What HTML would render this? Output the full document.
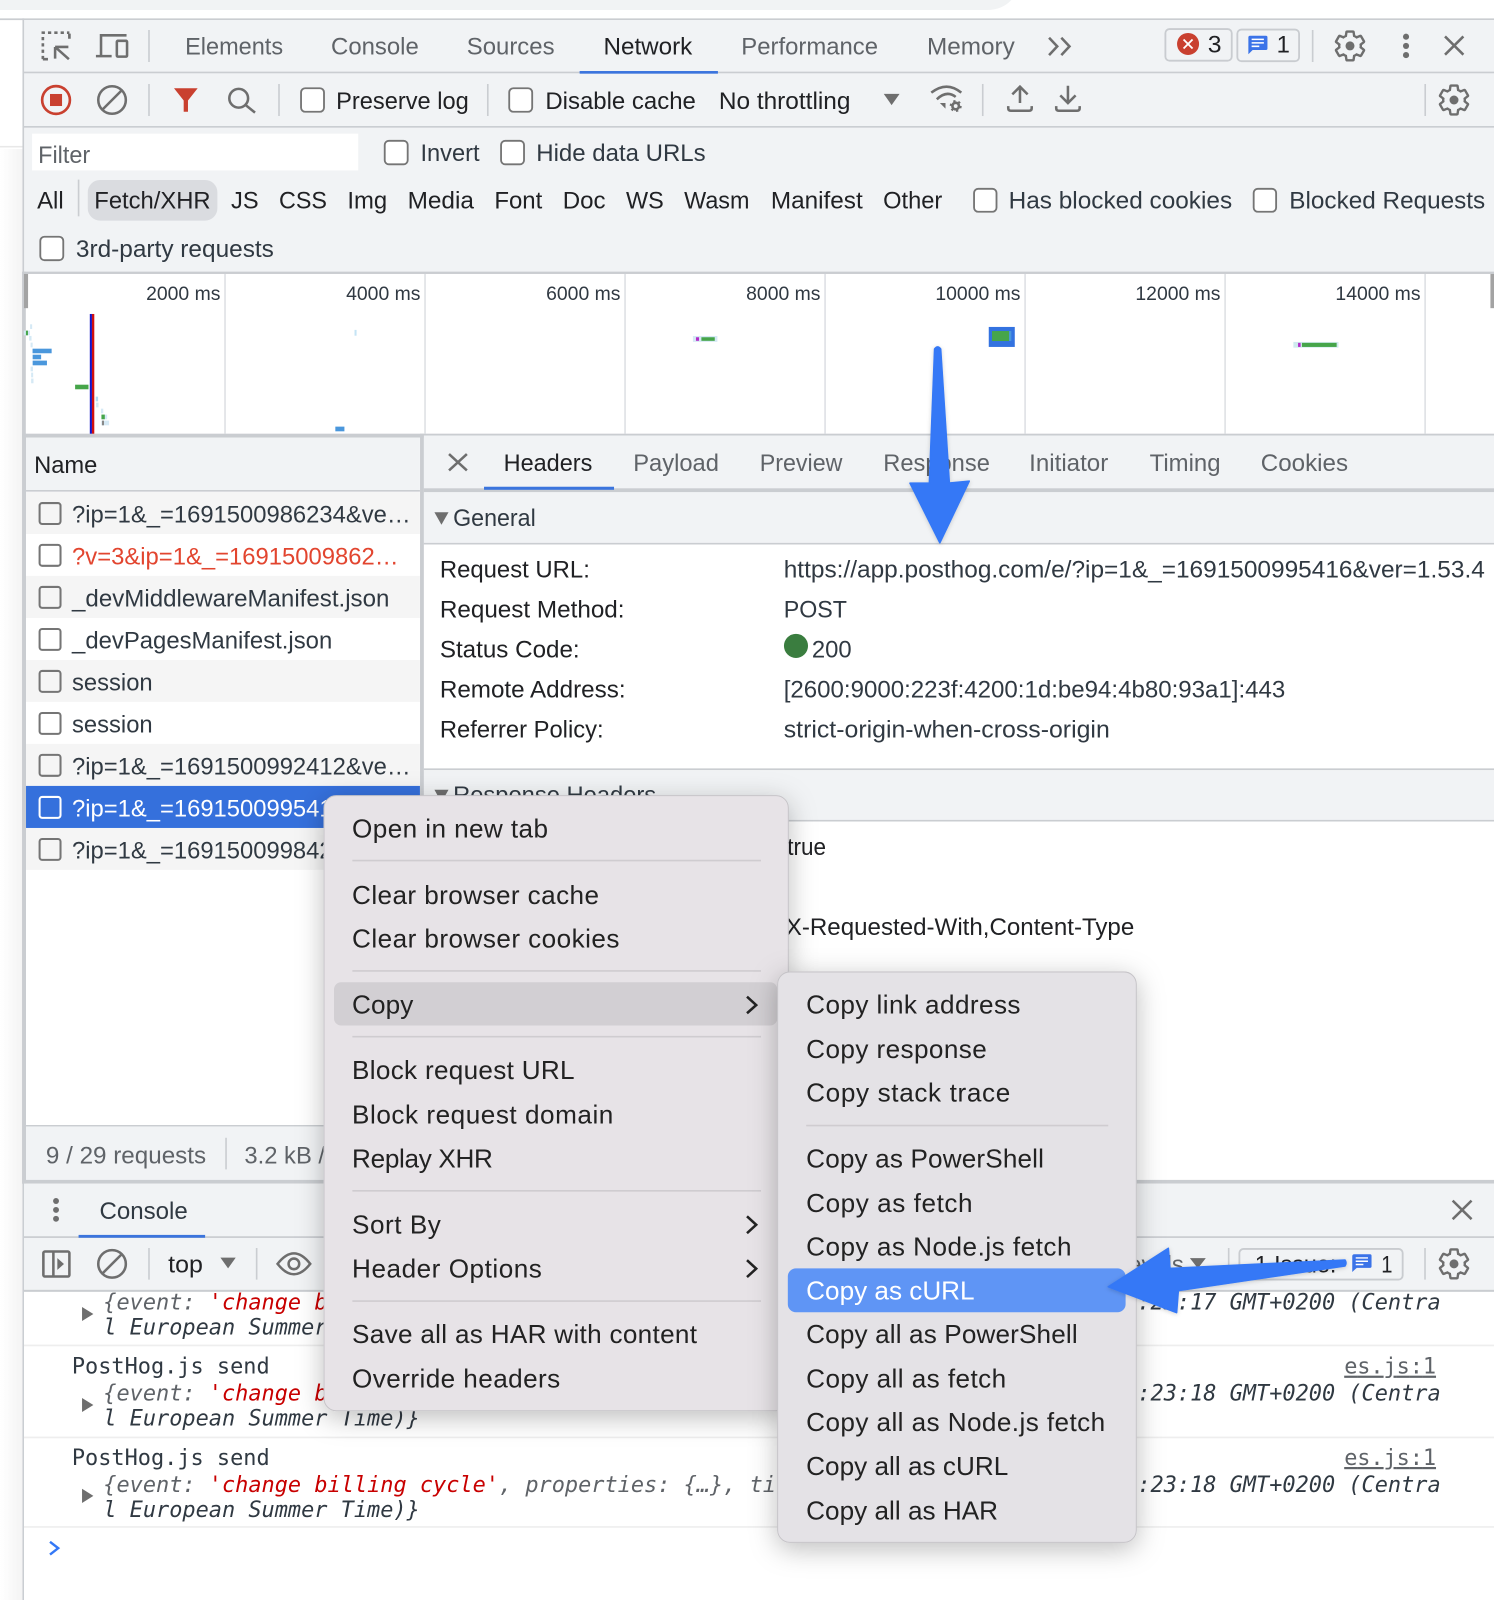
<!DOCTYPE html>
<html><head><meta charset="utf-8"><title>DevTools</title>
<style>
html,body{margin:0;padding:0;background:#fff;width:1494px;height:1600px;overflow:hidden}
svg{display:block}
text{font-family:"Liberation Sans",Arial,sans-serif;font-size:23.3px;fill:#303942;white-space:pre}
.g{fill:#5f6368}.d{fill:#202124}
.r{font-size:19px;fill:#303942}
.m{font-size:25.6px;fill:#222}
.c{font-family:"DejaVu Sans Mono","Liberation Mono",monospace;font-size:21.48px;fill:#303942}
.i{font-style:italic}
.ev{fill:#5f6368}.rd{fill:#c80000}
.ic{fill:none;stroke:#6e6e6e;stroke-width:2.5}
.cb{fill:#fff;stroke:#757575;stroke-width:1.8}
.sep{stroke:#cacdd1;stroke-width:1.6}
.msep{stroke:#cfccd0;stroke-width:1.6}
</style></head><body>
<svg xmlns="http://www.w3.org/2000/svg" width="1494" height="1600" viewBox="0 0 1464 1568" preserveAspectRatio="none">
<defs>
<g id="gear"><path d="M19.14 12.94c.04-.3.06-.61.06-.94 0-.32-.02-.64-.07-.94l2.03-1.58a.49.49 0 0 0 .12-.61l-1.92-3.32a.488.488 0 0 0-.59-.22l-2.39.96c-.5-.38-1.03-.7-1.62-.94l-.36-2.54a.484.484 0 0 0-.48-.41h-3.84c-.24 0-.43.17-.47.41l-.36 2.54c-.59.24-1.13.57-1.62.94l-2.39-.96c-.22-.08-.47 0-.59.22L2.74 8.87c-.12.21-.08.47.12.61l2.03 1.58c-.05.3-.09.63-.09.94s.02.64.07.94l-2.03 1.58a.49.49 0 0 0-.12.61l1.92 3.32c.12.22.37.29.59.22l2.39-.96c.5.38 1.03.7 1.62.94l.36 2.54c.05.24.24.41.48.41h3.84c.24 0 .44-.17.47-.41l.36-2.54c.59-.24 1.13-.56 1.62-.94l2.39.96c.22.08.47 0 .59-.22l1.92-3.32c.12-.22.07-.47-.12-.61l-2.01-1.58z" fill="none" stroke="#6e6e6e" stroke-width="1.6" transform="translate(-12 -12)"/><circle r="3" fill="#6e6e6e"/></g>
<filter id="sh" x="-20%" y="-20%" width="140%" height="140%"><feDropShadow dx="0" dy="6" stdDeviation="13" flood-color="#000" flood-opacity=".26"/></filter>
<filter id="ash" x="-30%" y="-30%" width="160%" height="160%"><feDropShadow dx="0" dy="1" stdDeviation="2" flood-color="#000" flood-opacity=".18"/></filter>
<linearGradient id="lg" x1="0" x2="1" y1="0" y2="0"><stop offset="0" stop-color="#fff"/><stop offset="1" stop-color="#f4f4f4"/></linearGradient>
</defs>

<!-- page background -->
<rect width="1464" height="1568" fill="#fff"/>
<rect x="0" y="146" width="22" height="1422" fill="url(#lg)"/>
<path d="M0 0H991Q982 9.8 967 9.8H0Z" fill="#f1f3f4"/>
<rect x="0" y="143" width="22" height="1.5" fill="#e8e8e8"/>
<rect x="0" y="18" width="1464" height="1.7" fill="#cacdd1"/>
<path d="M1447 1568Q1462 1564 1464 1548V1568Z" fill="#0d0d20"/>

<!-- devtools top background -->
<rect x="23.5" y="19.7" width="1441" height="248" fill="#f1f3f5"/>
<rect x="22" y="18" width="1.6" height="1550" fill="#cacdd1"/>
<rect x="23.5" y="70.2" width="1441" height="1.6" fill="#cacdd1"/>
<rect x="23.5" y="123.5" width="1441" height="1.6" fill="#cacdd1"/>

<!-- main tabs -->
<g transform="translate(-0.6 0)">
<text class="g" x="182" y="53.5" textLength="96" lengthAdjust="spacingAndGlyphs">Elements</text>
<text class="g" x="325" y="53.5" textLength="86" lengthAdjust="spacingAndGlyphs">Console</text>
<text class="g" x="458" y="53.5" textLength="86" lengthAdjust="spacingAndGlyphs">Sources</text>
<text class="d" x="592" y="53.5" textLength="87" lengthAdjust="spacingAndGlyphs">Network</text>
<text class="g" x="727" y="53.5" textLength="134" lengthAdjust="spacingAndGlyphs">Performance</text>
<text class="g" x="909" y="53.5" textLength="86" lengthAdjust="spacingAndGlyphs">Memory</text>
</g>
<rect x="568" y="69.6" width="135.500" height="2.6" fill="#3b74dd"/>
<path d="M1028 37L1036 45.5L1028 54M1040 37L1048 45.5L1040 54" class="ic" stroke-width="2"/>

<!-- top left icons -->
<path d="M42 58V32H68" fill="none" stroke="#6e6e6e" stroke-width="2.6" stroke-dasharray="3.2 3"/>
<path d="M68 33V38M42 58H47" fill="none" stroke="#6e6e6e" stroke-width="2.6"/>
<path d="M54 46L67.5 58M54 46H67M54 46V57.5" class="ic"/>
<path d="M124 34.6H99V55M94 55H109.4" class="ic"/>
<rect x="114.5" y="40" width="10" height="15.5" rx="1" class="ic"/>
<path d="M146 29.4V60.8M146 82.3V113.7" class="sep"/>

<!-- badges -->
<rect x="1142" y="28.5" width="65" height="31" rx="4" fill="#f1f3f5" stroke="#c9ccd0" stroke-width="1.8"/>
<circle cx="1164.2" cy="43.1" r="10.8" fill="#c9402f"/>
<path d="M1159.8 38.7L1168.6 47.5M1168.6 38.7L1159.8 47.5" stroke="#fff" stroke-width="1.8"/>
<text class="d" x="1183.5" y="51.5" textLength="13.5" lengthAdjust="spacingAndGlyphs">3</text>
<rect x="1212.5" y="29" width="60.5" height="31" rx="4" fill="#f1f3f5" stroke="#c9ccd0" stroke-width="1.8"/>
<path d="M1225 35H1240.5A1.5 1.5 0 0 1 1242 36.5V47.5A1.5 1.5 0 0 1 1240.5 49H1227.5L1223.3 53.2V36.5A1.5 1.5 0 0 1 1225 35Z" fill="#3b73e8"/>
<path d="M1226.5 38.6H1238.5M1226.5 42H1238.5M1226.5 45.4H1234" stroke="#fff" stroke-width="1.5"/>
<text class="d" x="1251" y="51.5" textLength="13" lengthAdjust="spacingAndGlyphs">1</text>
<path d="M1286.3 29.4V60.8M1396.6 82.3V113.7" class="sep"/>
<use href="#gear" transform="translate(1322.9 45) scale(1.47)"/>
<circle cx="1377.8" cy="36" r="3" fill="#6e6e6e"/><circle cx="1377.8" cy="45" r="3" fill="#6e6e6e"/><circle cx="1377.8" cy="54" r="3" fill="#6e6e6e"/>
<path d="M1416 35.7L1434 53.6M1434 35.7L1416 53.6" class="ic"/>

<!-- toolbar row -->
<circle cx="54.9" cy="98" r="13.6" fill="none" stroke="#c9402f" stroke-width="2.6"/>
<rect x="49" y="92.1" width="11.8" height="11.8" fill="#c9402f"/>
<circle cx="109.8" cy="98" r="13.5" class="ic"/>
<path d="M100 107.8L119.6 88.2" class="ic"/>
<path d="M170.5 86.5H193.7L184.2 98.5V109.5H180V98.5Z" fill="#c9402f"/>
<circle cx="233.9" cy="96.3" r="9.2" class="ic"/>
<path d="M240.5 102.8L249.9 110.4" class="ic"/>
<path d="M273.4 82.3V113.7M478 82.3V113.7" class="sep"/>
<rect x="295" y="86.5" width="22.5" height="23" rx="4" class="cb"/>
<g transform="translate(-0.6 0)">
<text class="d" x="330" y="106.8" textLength="130" lengthAdjust="spacingAndGlyphs">Preserve log</text>
<text class="d" x="535" y="106.8" textLength="147.500" lengthAdjust="spacingAndGlyphs">Disable cache</text>
<text class="d" x="705" y="106.8" textLength="129" lengthAdjust="spacingAndGlyphs">No throttling</text>
</g>
<rect x="499" y="86.5" width="22.5" height="23" rx="4" class="cb"/>
<path d="M866 92H881.500L873.700 103Z" fill="#6e6e6e"/>
<path d="M912.6 90.8Q927.700 79 942 90.8M918 97.3Q927.700 88 936.500 95" class="ic"/>
<path d="M921 101H926.500V106.500Z" fill="#6e6e6e"/>
<circle cx="936.500" cy="103.900" r="3.200" fill="none" stroke="#6e6e6e" stroke-width="2.600"/>
<circle cx="936.500" cy="103.900" r="5" fill="none" stroke="#6e6e6e" stroke-width="1.800" stroke-dasharray="2.200 3.040"/>
<path d="M963 82.300V113.700" class="sep"/>
<path d="M999.500 101V85.500M992 92.500L999.500 85L1007 92.500M988 104V106Q988 108.500 990.500 108.500H1008.500Q1011 108.500 1011 106V104" class="ic"/>
<path d="M1046.500 84V101M1039 93.500L1046.500 101L1054 93.500M1035 104V106Q1035 108.500 1037.500 108.500H1055.500Q1058 108.500 1058 106V104" class="ic"/>
<use href="#gear" transform="translate(1424.8 98) scale(1.47)"/>

<!-- filter row -->
<rect x="31.400" y="131" width="319.600" height="36" fill="#fff"/>
<text class="g" x="37.400" y="159.800" textLength="51" lengthAdjust="spacingAndGlyphs">Filter</text>
<rect x="377" y="138" width="22.500" height="23" rx="4" class="cb"/>
<text x="412" y="157.800" textLength="58" lengthAdjust="spacingAndGlyphs">Invert</text>
<rect x="491" y="138" width="22.500" height="23" rx="4" class="cb"/>
<text x="525.500" y="157.800" textLength="166" lengthAdjust="spacingAndGlyphs">Hide data URLs</text>

<path d="M77 176V212" class="sep"/>
<rect x="86" y="176.400" width="127" height="39.800" rx="12" fill="#dadce0"/>
<g transform="translate(-0.6 -0.3)">
<text class="d" x="37" y="204.500" textLength="26" lengthAdjust="spacingAndGlyphs">All</text>
<text class="d" x="93" y="204.500" textLength="114" lengthAdjust="spacingAndGlyphs">Fetch/XHR</text>
<text class="d" x="227" y="204.500" textLength="27" lengthAdjust="spacingAndGlyphs">JS</text>
<text class="d" x="274" y="204.500" textLength="47" lengthAdjust="spacingAndGlyphs">CSS</text>
<text class="d" x="341" y="204.500" textLength="39" lengthAdjust="spacingAndGlyphs">Img</text>
<text class="d" x="400" y="204.500" textLength="65" lengthAdjust="spacingAndGlyphs">Media</text>
<text class="d" x="485" y="204.500" textLength="47" lengthAdjust="spacingAndGlyphs">Font</text>
<text class="d" x="552" y="204.500" textLength="42" lengthAdjust="spacingAndGlyphs">Doc</text>
<text class="d" x="614" y="204.500" textLength="37" lengthAdjust="spacingAndGlyphs">WS</text>
<text class="d" x="671" y="204.500" textLength="64" lengthAdjust="spacingAndGlyphs">Wasm</text>
<text class="d" x="756" y="204.500" textLength="90" lengthAdjust="spacingAndGlyphs">Manifest</text>
<text class="d" x="866" y="204.500" textLength="58" lengthAdjust="spacingAndGlyphs">Other</text>
<text x="989" y="204.500" textLength="219" lengthAdjust="spacingAndGlyphs">Has blocked cookies</text>
<text x="1264" y="204.500" textLength="192" lengthAdjust="spacingAndGlyphs">Blocked Requests</text>
</g>
<rect x="954.500" y="185" width="22" height="22.500" rx="4" class="cb"/>
<rect x="1228.500" y="185" width="22" height="22.500" rx="4" class="cb"/>
<rect x="39.500" y="232" width="22.500" height="23" rx="4" class="cb"/>
<text x="74.400" y="252.100" textLength="194" lengthAdjust="spacingAndGlyphs">3rd-party requests</text>

<!-- overview -->
<rect x="23.500" y="266.200" width="1441" height="2.300" fill="#cacdd1"/>
<rect x="25" y="268.500" width="1439" height="157" fill="#fff"/>
<rect x="21.600" y="266.200" width="3.700" height="160" fill="#cacdd1"/>
<path d="M220.500 268.500V425M416.500 268.500V425M612.500 268.500V425M808.500 268.500V425M1004.500 268.500V425M1200.500 268.500V425M1396.500 268.500V425" stroke="#dfe1e5" stroke-width="1.600"/>
<rect x="23.500" y="268.500" width="4" height="33.500" fill="#a3a3a3"/>
<rect x="1460.500" y="268.500" width="3.500" height="33.500" fill="#a3a3a3"/>
<text class="r" x="216" y="294" text-anchor="end">2000 ms</text>
<text class="r" x="412" y="294" text-anchor="end">4000 ms</text>
<text class="r" x="608" y="294" text-anchor="end">6000 ms</text>
<text class="r" x="804" y="294" text-anchor="end">8000 ms</text>
<text class="r" x="1000" y="294" text-anchor="end">10000 ms</text>
<text class="r" x="1196" y="294" text-anchor="end">12000 ms</text>
<text class="r" x="1392" y="294" text-anchor="end">14000 ms</text>
<!-- waterfall -->
<g fill="#d5e9f5">
<rect x="29.500" y="317.800" width="2" height="4.600"/><rect x="23.400" y="324" width="6" height="4.600"/><rect x="28.600" y="329.200" width="2.300" height="4.600"/><rect x="30" y="335.800" width="2" height="4.600"/><rect x="30" y="359.300" width="2.300" height="4.600"/><rect x="30.500" y="365.200" width="2" height="4.600"/><rect x="30.500" y="371" width="2.300" height="4.600"/><rect x="93.800" y="388.700" width="2.300" height="4.600" fill="#b5dcf2"/><rect x="94.200" y="394.600" width="2.300" height="4.600"/><rect x="98.900" y="400.500" width="2.300" height="4.600"/><rect x="99.400" y="406.300" width="5.600" height="4.600"/><rect x="99.400" y="412.200" width="7.500" height="4.600"/><rect x="347.400" y="323.300" width="2" height="5.700" fill="#c5e4f5"/><rect x="679" y="329.300" width="24" height="5.700"/><rect x="1267.400" y="335.100" width="44.200" height="5.600" fill="#cfeaee"/>
</g>
<rect x="25.400" y="324" width="2" height="4.600" fill="#46a54a"/><rect x="99.400" y="406.300" width="3.300" height="4.600" fill="#46a54a"/><rect x="99.900" y="412.200" width="2" height="4.600" fill="#888"/>
<rect x="31.900" y="341.700" width="18.700" height="4.500" fill="#4a97dc"/><rect x="32" y="347.600" width="8.300" height="4.500" fill="#4a97dc"/><rect x="32" y="353.400" width="14" height="4.600" fill="#4a97dc"/>
<rect x="73.600" y="377" width="13.100" height="4.500" fill="#46a54a"/>
<rect x="88" y="307.700" width="2.100" height="117.600" fill="#1414c8"/><rect x="90.100" y="307.700" width="2.300" height="117.600" fill="#d01010"/>
<rect x="328.600" y="418.100" width="8.900" height="4.600" fill="#4a97dc"/>
<rect x="682" y="330.500" width="3" height="3.500" fill="#b32cc8"/><rect x="687.300" y="330.500" width="13.100" height="3.500" fill="#46a54a"/>
<rect x="968.900" y="320.400" width="25.500" height="19.600" fill="#3372e0"/><rect x="972.100" y="324.400" width="18.900" height="9.800" fill="#4a97dc"/><rect x="972.100" y="324.400" width="16.700" height="9.800" fill="#46a54a"/>
<rect x="1272" y="336" width="2.500" height="4" fill="#b32cc8"/><rect x="1275.800" y="336" width="34" height="4" fill="#46a54a"/>

<!-- panel border -->
<rect x="21.600" y="425" width="1443" height="3.900" fill="#cacdd1"/>
<rect x="21.600" y="425" width="3.900" height="735" fill="#cacdd1"/>

<!-- network list -->
<rect x="25.500" y="428.900" width="386" height="51.300" fill="#f1f3f5"/>
<rect x="25.500" y="480.200" width="386" height="1.800" fill="#cacdd1"/>
<text class="d" x="33.400" y="463.500" textLength="62" lengthAdjust="spacingAndGlyphs">Name</text>
<rect x="25.500" y="482" width="386" height="621" fill="#fff"/>
<g fill="#f5f5f5">
<rect x="25.500" y="482" width="386" height="41.300"/><rect x="25.500" y="564.400" width="386" height="41.200"/><rect x="25.500" y="646.800" width="386" height="41.100"/><rect x="25.500" y="729" width="386" height="41.200"/><rect x="25.500" y="811.400" width="386" height="41.100"/>
</g>
<rect x="25.500" y="770.200" width="386" height="41.200" fill="#3570dc"/>
<g fill="none" stroke="#757575" stroke-width="2">
<rect x="38.800" y="493" width="20.500" height="20.500" rx="2.500"/><rect x="38.800" y="534" width="20.500" height="20.500" rx="2.500"/><rect x="38.800" y="575.200" width="20.500" height="20.500" rx="2.500"/><rect x="38.800" y="616.400" width="20.500" height="20.500" rx="2.500"/><rect x="38.800" y="657.500" width="20.500" height="20.500" rx="2.500"/><rect x="38.800" y="698.700" width="20.500" height="20.500" rx="2.500"/><rect x="38.800" y="739.800" width="20.500" height="20.500" rx="2.500"/><rect x="38.800" y="781" width="20.500" height="20.500" rx="2.500" stroke="#fff"/><rect x="38.800" y="822.200" width="20.500" height="20.500" rx="2.500"/>
</g>
<g transform="translate(-0.4 0.7)">
<text x="71" y="511.200" textLength="331.800" lengthAdjust="spacingAndGlyphs">?ip=1&amp;_=1691500986234&amp;ve…</text>
<text x="71" y="552.300" textLength="320" lengthAdjust="spacingAndGlyphs" style="fill:#e2452f">?v=3&amp;ip=1&amp;_=16915009862…</text>
<text x="71" y="593.500" textLength="311" lengthAdjust="spacingAndGlyphs">_devMiddlewareManifest.json</text>
<text x="71" y="634.600" textLength="255" lengthAdjust="spacingAndGlyphs">_devPagesManifest.json</text>
<text x="71" y="675.800" textLength="79" lengthAdjust="spacingAndGlyphs">session</text>
<text x="71" y="717" textLength="79" lengthAdjust="spacingAndGlyphs">session</text>
<text x="71" y="758.100" textLength="331.800" lengthAdjust="spacingAndGlyphs">?ip=1&amp;_=1691500992412&amp;ve…</text>
<text x="71" y="799.300" textLength="331.800" lengthAdjust="spacingAndGlyphs" style="fill:#fff">?ip=1&amp;_=1691500995416&amp;ve…</text>
<text x="71" y="840.400" textLength="331.800" lengthAdjust="spacingAndGlyphs">?ip=1&amp;_=1691500998423&amp;ve…</text>
</g>
<!-- status -->
<rect x="25.500" y="1103" width="386" height="53.500" fill="#f1f3f5"/>
<rect x="25.500" y="1102.500" width="386" height="1.400" fill="#cacdd1"/>
<text class="g" x="45" y="1140.200" textLength="157" lengthAdjust="spacingAndGlyphs">9 / 29 requests</text>
<path d="M221.500 1115V1146" class="sep"/>
<text class="g" x="239.500" y="1140.200" textLength="79" lengthAdjust="spacingAndGlyphs">3.2 kB /</text>

<!-- details -->
<rect x="411.600" y="425" width="3.800" height="735" fill="#cacdd1"/>
<rect x="415.400" y="426.800" width="1049" height="51.700" fill="#f1f3f5"/>
<path d="M440 445L457.500 461M457.500 445L440 461" class="ic"/>
<g transform="translate(-0.5 0)">
<text class="d" x="494" y="461.500" textLength="87" lengthAdjust="spacingAndGlyphs">Headers</text>
<text class="g" x="621" y="461.500" textLength="84" lengthAdjust="spacingAndGlyphs">Payload</text>
<text class="g" x="745" y="461.500" textLength="81" lengthAdjust="spacingAndGlyphs">Preview</text>
<text class="g" x="866" y="461.500" textLength="104.500" lengthAdjust="spacingAndGlyphs">Response</text>
<text class="g" x="1009" y="461.500" textLength="77.500" lengthAdjust="spacingAndGlyphs">Initiator</text>
<text class="g" x="1127" y="461.500" textLength="69.500" lengthAdjust="spacingAndGlyphs">Timing</text>
<text class="g" x="1236" y="461.500" textLength="85.500" lengthAdjust="spacingAndGlyphs">Cookies</text>
</g>
<rect x="415.400" y="478.500" width="1049" height="3.900" fill="#cacdd1"/>
<rect x="474.300" y="477" width="127.400" height="3" fill="#3b74dd"/>
<rect x="415.400" y="482.400" width="1049" height="49.600" fill="#f1f3f5"/>
<rect x="415.400" y="532" width="1049" height="1.600" fill="#cacdd1"/>
<path d="M425.700 502H439.500L432.600 514.300Z" fill="#6e6e6e"/>
<text x="444" y="515.500" textLength="81" lengthAdjust="spacingAndGlyphs">General</text>
<rect x="415.400" y="533.600" width="1049" height="219.400" fill="#fff"/>
<g transform="translate(0 0.7)">
<text class="d" x="431" y="565.200" textLength="147" lengthAdjust="spacingAndGlyphs">Request URL:</text>
<text x="768" y="565.200" textLength="687" lengthAdjust="spacingAndGlyphs">https://app.posthog.com/e/?ip=1&amp;_=1691500995416&amp;ver=1.53.4</text>
<text class="d" x="431" y="604.400" textLength="181" lengthAdjust="spacingAndGlyphs">Request Method:</text>
<text x="768" y="604.400" textLength="62" lengthAdjust="spacingAndGlyphs">POST</text>
<text class="d" x="431" y="643.500" textLength="137" lengthAdjust="spacingAndGlyphs">Status Code:</text>
<text x="795.600" y="643.500" textLength="39" lengthAdjust="spacingAndGlyphs">200</text>
<text class="d" x="431" y="682.700" textLength="182" lengthAdjust="spacingAndGlyphs">Remote Address:</text>
<text x="768" y="682.700" textLength="491.500" lengthAdjust="spacingAndGlyphs">[2600:9000:223f:4200:1d:be94:4b80:93a1]:443</text>
<text class="d" x="431" y="722" textLength="160.500" lengthAdjust="spacingAndGlyphs">Referrer Policy:</text>
<text x="768" y="722" textLength="319.500" lengthAdjust="spacingAndGlyphs">strict-origin-when-cross-origin</text>
</g>
<circle cx="780" cy="633" r="11.800" fill="#3a7d3f"/>
<rect x="415.400" y="753" width="1049" height="1.800" fill="#cacdd1"/>
<rect x="415.400" y="754.800" width="1049" height="49" fill="#f1f3f5"/>
<rect x="415.400" y="803.500" width="1049" height="1.600" fill="#cacdd1"/>
<path d="M425.700 774H439.500L432.600 786.300Z" fill="#6e6e6e"/>
<text x="444" y="787" textLength="199" lengthAdjust="spacingAndGlyphs">Response Headers</text>
<rect x="415.400" y="805.100" width="1049" height="353" fill="#fff"/>
<text class="d" x="771.500" y="838" textLength="38" lengthAdjust="spacingAndGlyphs">true</text>
<text class="d" x="770" y="916.500" textLength="341.500" lengthAdjust="spacingAndGlyphs">X-Requested-With,Content-Type</text>

<!-- console content -->
<rect x="23.500" y="1156.300" width="1441" height="3.700" fill="#cacdd1"/>
<rect x="23.500" y="1265" width="1441" height="303" fill="#fff"/>
<g transform="translate(-0.8 0.7)">
<text class="c i" x="102" y="1282.400"><tspan class="ev">{event:</tspan> <tspan class="rd">'change billing cycle'</tspan></text>
<text class="c i" x="102" y="1307.200">l European Summer Time)}</text>
<text class="c i" x="102" y="1371.900"><tspan class="ev">{event:</tspan> <tspan class="rd">'change billing cycle'</tspan></text>
<text class="c i" x="102" y="1396.400">l European Summer Time)}</text>
<text class="c i" x="102" y="1461.400"><tspan class="ev">{event:</tspan> <tspan class="rd">'change billing cycle'</tspan><tspan class="ev">, properties: {…}, ti</tspan></text>
<text class="c i" x="102" y="1486.200">l European Summer Time)}</text>
<text class="c i" x="1115.300" y="1282.400">:23:17 GMT+0200 (Centra</text>
<text class="c i" x="1115.300" y="1371.900">:23:18 GMT+0200 (Centra</text>
<text class="c i" x="1115.300" y="1461.400">:23:18 GMT+0200 (Centra</text>
<text class="c" x="71.200" y="1345.100">PostHog.js send</text>
<text class="c" x="71.200" y="1434.900">PostHog.js send</text>
<text class="c" x="1318" y="1345.500" style="fill:#5f6368;text-decoration:underline" textLength="90">es.js:1</text>
<text class="c" x="1318" y="1435" style="fill:#5f6368;text-decoration:underline" textLength="90">es.js:1</text>
</g>
<path d="M80.400 1280.800L91.500 1287.700L80.400 1294.600Z M80.400 1370L91.500 1376.900L80.400 1383.700Z M80.400 1459L91.500 1466L80.400 1472.900Z" fill="#6e6e6e"/>
<path d="M23.500 1318.500H1464M23.500 1408.700H1464M23.500 1496.400H1464" stroke="#eeeeee" stroke-width="1.600"/>
<path d="M49 1511L57 1517.200L49 1523.500" fill="none" stroke="#3478f6" stroke-width="2.400"/>

<!-- drawer toolbar -->
<rect x="23.500" y="1160" width="1441" height="104" fill="#f1f3f5"/>
<rect x="23.500" y="1211.500" width="1441" height="1.700" fill="#cacdd1"/>
<rect x="23.500" y="1264" width="1441" height="2" fill="#cacdd1"/>
<circle cx="54.900" cy="1177" r="2.900" fill="#6e6e6e"/><circle cx="54.900" cy="1185.700" r="2.900" fill="#6e6e6e"/><circle cx="54.900" cy="1194.400" r="2.900" fill="#6e6e6e"/>
<text class="d" x="97.500" y="1194.500" textLength="86.500" lengthAdjust="spacingAndGlyphs" style="fill:#303942">Console</text>
<rect x="77" y="1210.200" width="124" height="2.800" fill="#3b74dd"/>
<rect x="42.500" y="1226.500" width="25.500" height="24.500" rx="1.500" class="ic"/>
<path d="M52.300 1226.500V1251" class="ic"/>
<path d="M56.200 1233L62.700 1238.700L56.200 1244.500Z" fill="#6e6e6e"/>
<circle cx="109.800" cy="1238.600" r="13.500" class="ic"/>
<path d="M100 1248.400L119.600 1228.800" class="ic"/>
<path d="M146 1223V1254M251.500 1223V1254" class="sep"/>
<text class="d" x="164.800" y="1247" textLength="34" lengthAdjust="spacingAndGlyphs">top</text>
<path d="M216 1232.500H231L223.500 1243Z" fill="#6e6e6e"/>
<path d="M272 1238.600Q288 1218 304 1238.600Q288 1259 272 1238.600Z" class="ic"/>
<circle cx="288" cy="1238.600" r="5.200" class="ic"/>
<path d="M1423.500 1176.600L1442 1194.800M1442 1176.600L1423.500 1194.800" class="ic"/>
<text class="g" x="1160" y="1247" text-anchor="end">Default levels</text>
<path d="M1166 1233H1181.600L1173.800 1243Z" fill="#6e6e6e"/>
<path d="M1204 1223V1254M1396.400 1223V1254" class="sep"/>
<rect x="1214.500" y="1224" width="160" height="30" rx="4" fill="none" stroke="#c9ccd0" stroke-width="1.800"/>
<text class="d" x="1229.500" y="1247" textLength="80" lengthAdjust="spacingAndGlyphs">1 Issue:</text>
<path d="M1327 1229.200H1342.500A1.500 1.500 0 0 1 1344 1230.700V1241A1.500 1.500 0 0 1 1342.500 1242.500H1329.500L1325.100 1246.500V1231A1.800 1.800 0 0 1 1327 1229.200Z" fill="#3b73e8"/>
<path d="M1328.500 1232.800H1340.500M1328.500 1236H1340.500M1328.500 1239.200H1336" stroke="#fff" stroke-width="1.400"/>
<text class="d" x="1353.500" y="1247" textLength="11" lengthAdjust="spacingAndGlyphs">1</text>
<use href="#gear" transform="translate(1424.800 1238.600) scale(1.47)"/>

<!-- context menu -->
<rect x="317.500" y="779.700" width="455" height="602.800" rx="12" fill="#e7e3e7" stroke="#c6c4c8" stroke-width="1" filter="url(#sh)"/>
<rect x="327.300" y="962.600" width="434.400" height="42.400" rx="7" fill="#d2cfd3"/>
<path d="M345.300 843.400H745.700M345.300 951.500H745.700M345.300 1016H745.700M345.300 1167H745.700M345.300 1275H745.700" class="msep"/>
<text class="m" x="345" y="820.800" textLength="192">Open in new tab</text>
<text class="m" x="345" y="885.800" textLength="242">Clear browser cache</text>
<text class="m" x="345" y="928.600" textLength="262">Clear browser cookies</text>
<text class="m" x="345" y="993" textLength="60">Copy</text>
<text class="m" x="345" y="1057.600" textLength="218">Block request URL</text>
<text class="m" x="345" y="1101" textLength="256">Block request domain</text>
<text class="m" x="345" y="1144" textLength="138">Replay XHR</text>
<text class="m" x="345" y="1209" textLength="87">Sort By</text>
<text class="m" x="345" y="1252" textLength="186">Header Options</text>
<text class="m" x="345" y="1316" textLength="338">Save all as HAR with content</text>
<text class="m" x="345" y="1359.600" textLength="204">Override headers</text>
<path d="M732 976.700L741 985L732 993M732 1192L741 1200.300L732 1208.500M732 1235L741 1243.300L732 1251.500" fill="none" stroke="#222" stroke-width="2.500"/>

<!-- submenu -->
<rect x="762" y="952.500" width="351.500" height="559" rx="12" fill="#e4e2e6" stroke="#c6c4c8" stroke-width="1" filter="url(#sh)"/>
<path d="M790 1103H1086" class="msep"/>
<rect x="772" y="1243" width="331" height="43" rx="8" fill="#5f95f5"/>
<text class="m" x="790" y="993" textLength="210">Copy link address</text>
<text class="m" x="790" y="1036.600" textLength="177">Copy response</text>
<text class="m" x="790" y="1079.600" textLength="200">Copy stack trace</text>
<text class="m" x="790" y="1144" textLength="233">Copy as PowerShell</text>
<text class="m" x="790" y="1187.600" textLength="163">Copy as fetch</text>
<text class="m" x="790" y="1230.600" textLength="260">Copy as Node.js fetch</text>
<text class="m" x="790" y="1273.600" textLength="165" style="fill:#fff">Copy as cURL</text>
<text class="m" x="790" y="1316" textLength="266">Copy all as PowerShell</text>
<text class="m" x="790" y="1359.600" textLength="196">Copy all as fetch</text>
<text class="m" x="790" y="1402.600" textLength="293">Copy all as Node.js fetch</text>
<text class="m" x="790" y="1445.600" textLength="198">Copy all as cURL</text>
<text class="m" x="790" y="1489" textLength="188">Copy all as HAR</text>

<!-- arrows -->
<path d="M915.800 342Q918.800 338 921.800 342L930.300 473.400L949.800 471.500L921 532L891.700 473.500L910.700 473.400Z" fill="#3478f6" stroke="#3478f6" stroke-width="1.500" stroke-linejoin="round" filter="url(#ash)"/>
<path d="M1318 1234.800L1146.500 1243L1144.900 1223.300L1086 1261L1153 1286.400L1154.700 1264.800L1318 1240.700Q1320 1237.500 1318 1234.800Z" fill="#3478f6" stroke="#3478f6" stroke-width="1.500" stroke-linejoin="round" filter="url(#ash)"/>
</svg>
</body></html>
